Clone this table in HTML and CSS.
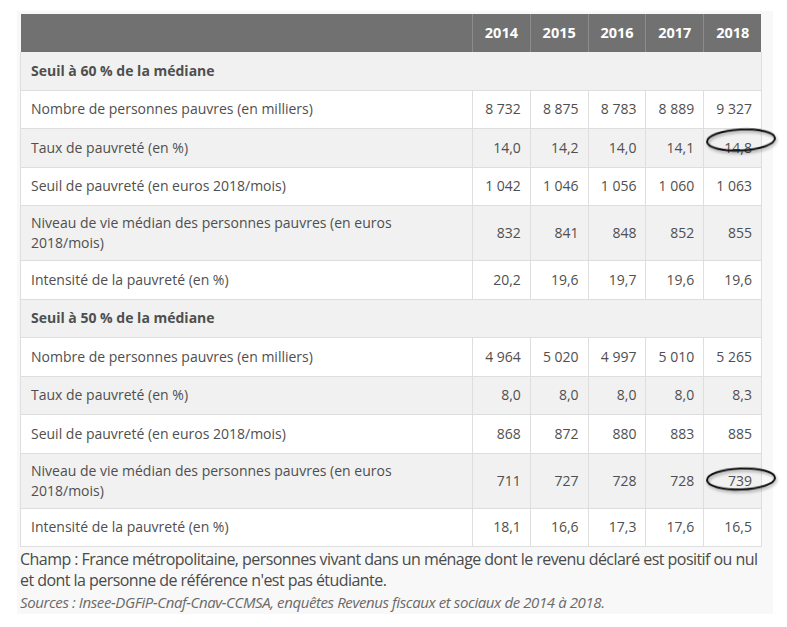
FILE: index.html
```html
<!DOCTYPE html>
<html lang="fr">
<head>
<meta charset="utf-8">
<title>Pauvreté</title>
<link rel="stylesheet" href="styles.css">
</head>
<body>
<div class="panel">
  <table class="data">
    <colgroup>
      <col class="c-label"><col class="c-year"><col class="c-year"><col class="c-year"><col class="c-year"><col class="c-year">
    </colgroup>
    <thead>
      <tr><th></th><th>2014</th><th>2015</th><th>2016</th><th>2017</th><th>2018</th></tr>
    </thead>
    <tbody>
      <tr class="section"><td colspan="6">Seuil à 60 % de la médiane</td></tr>
      <tr><td>Nombre de personnes pauvres (en milliers)</td><td>8 732</td><td>8 875</td><td>8 783</td><td>8 889</td><td>9 327</td></tr>
      <tr class="alt"><td>Taux de pauvreté (en %)</td><td>14,0</td><td>14,2</td><td>14,0</td><td>14,1</td><td>14,8</td></tr>
      <tr><td>Seuil de pauvreté (en euros 2018/mois)</td><td>1 042</td><td>1 046</td><td>1 056</td><td>1 060</td><td>1 063</td></tr>
      <tr class="alt"><td>Niveau de vie médian des personnes pauvres (en euros 2018/mois)</td><td>832</td><td>841</td><td>848</td><td>852</td><td>855</td></tr>
      <tr><td>Intensité de la pauvreté (en %)</td><td>20,2</td><td>19,6</td><td>19,7</td><td>19,6</td><td>19,6</td></tr>
      <tr class="section"><td colspan="6">Seuil à 50 % de la médiane</td></tr>
      <tr><td>Nombre de personnes pauvres (en milliers)</td><td>4 964</td><td>5 020</td><td>4 997</td><td>5 010</td><td>5 265</td></tr>
      <tr class="alt"><td>Taux de pauvreté (en %)</td><td>8,0</td><td>8,0</td><td>8,0</td><td>8,0</td><td>8,3</td></tr>
      <tr><td>Seuil de pauvreté (en euros 2018/mois)</td><td>868</td><td>872</td><td>880</td><td>883</td><td>885</td></tr>
      <tr class="alt"><td>Niveau de vie médian des personnes pauvres (en euros 2018/mois)</td><td>711</td><td>727</td><td>728</td><td>728</td><td>739</td></tr>
      <tr><td>Intensité de la pauvreté (en %)</td><td>18,1</td><td>16,6</td><td>17,3</td><td>17,6</td><td>16,5</td></tr>
    </tbody>
  </table>
  <p class="note">Champ : France métropolitaine, personnes vivant dans un ménage dont le revenu déclaré est positif ou nul et dont la personne de référence n'est pas étudiante.</p>
  <p class="source">Sources : Insee-DGFiP-Cnaf-Cnav-CCMSA, enquêtes Revenus fiscaux et sociaux de 2014 à 2018.</p>
</div>
<svg class="ring ring-top" width="74" height="28" viewBox="0 0 74 28"><ellipse cx="37" cy="14" rx="34" ry="10.5" transform="rotate(-3 37 14)"/></svg>
<svg class="ring ring-bottom" width="74" height="28" viewBox="0 0 74 28"><ellipse cx="37" cy="14" rx="34" ry="10.5" transform="rotate(-2 37 14)"/></svg>
</body>
</html>
```

FILE: styles.css
```css
html, body {
  margin: 0;
  padding: 0;
  background: #ffffff;
}
body {
  position: relative;
  width: 787px;
  height: 627px;
  overflow: hidden;
  font-family: "Open Sans", "DejaVu Sans", sans-serif;
  color: #4f4f4f;
}
.panel {
  margin: 11px 0 0 17px;
  width: 756px;
  height: 603px;
  box-sizing: border-box;
  padding: 3px 12px 0 3px;
  background: #f8f8f8;
}
.data {
  width: 741px;
  border-collapse: collapse;
  table-layout: fixed;
  font-size: 14px;
  line-height: 20px;
}
.c-label { width: 452px; }
.c-year { width: 57.8px; }
.data th {
  background: #717171;
  color: #ffffff;
  font-weight: 700;
  font-size: 14.5px;
  height: 38px;
  padding: 0;
  text-align: center;
  border-left: 1px solid #8c8c8c;
  box-sizing: border-box;
}
.data th:first-child { border-left: none; }
.data td {
  border: 1px solid #dedede;
  padding: 7px 9px 7px 10px;
  height: 23.5px;
  text-align: right;
  background: #ffffff;
  vertical-align: middle;
}
.data td:first-child {
  text-align: left;
  padding-right: 40px;
}
.data tr.alt td { background: #f1f1f1; }
.data tr.section td {
  background: #f1f1f1;
  font-weight: 700;
  text-align: left;
}
.data tbody tr:first-child td { border-top: none; }
.note {
  margin: 2px 0 0 0;
  font-size: 16px;
  line-height: 21px;
  color: #4a4a4a;
  letter-spacing: -0.55px;
}
.source {
  margin: 1px 0 0 0;
  font-size: 15px;
  line-height: 21px;
  font-style: italic;
  color: #6a6a6a;
  letter-spacing: -0.4px;
}
.ring {
  position: absolute;
  overflow: visible;
}
.ring ellipse {
  fill: none;
  stroke: #111111;
  stroke-width: 2;
  filter: drop-shadow(1px 2px 1.5px rgba(0,0,0,0.35));
}
.ring-top { left: 704px; top: 126px; }
.ring-bottom { left: 704px; top: 465px; }
```
